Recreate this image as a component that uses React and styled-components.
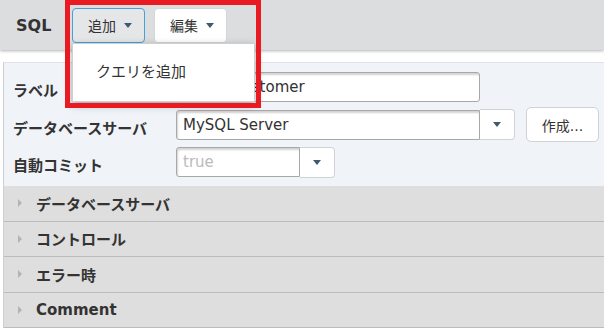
import React from 'react';
import styled, { createGlobalStyle } from 'styled-components';

const GlobalStyle = createGlobalStyle`
  body {
    margin: 0;
    background: #ffffff;
    overflow: hidden;
    font-family: 'DejaVu Sans', 'Noto Sans CJK JP', sans-serif;
    color: #333333;
  }
`;

const Page = styled.div`
  position: relative;
  width: 604px;
  height: 330px;
`;

const Header = styled.div`
  display: flex;
  align-items: center;
  height: 50px;
  padding: 0 16px;
  background: #dcdddf;
  box-shadow: 0 1px 3px rgba(0, 0, 0, 0.3);
`;

const Title = styled.div`
  font-size: 16px;
  font-weight: bold;
  width: 56px;
  color: #333;
`;

const MenuWrap = styled.div`
  position: relative;
`;

const Caret = styled.span`
  display: inline-block;
  width: 0;
  height: 0;
  border-left: 4.5px solid transparent;
  border-right: 4.5px solid transparent;
  border-top: 5px solid #3d5a6f;
`;

const ToolButton = styled.button`
  display: flex;
  align-items: center;
  gap: 8px;
  height: 35px;
  padding: 0 12px 0 15px;
  margin-left: ${(p) => p.$ml || 0}px;
  box-sizing: border-box;
  font: 14px 'DejaVu Sans', 'Noto Sans CJK JP', sans-serif;
  color: #333;
  border-radius: 4px;
  background: ${(p) => (p.$active ? '#e5e6e8' : '#ffffff')};
  border: 1px solid ${(p) => (p.$active ? '#4a9fd9' : '#d6d6d6')};
`;

const Menu = styled.div`
  position: absolute;
  top: 35px;
  left: 0;
  width: 183px;
  box-sizing: border-box;
  padding: 18px 23px;
  background: #ffffff;
  border: 1px solid #cfcfcf;
  box-shadow: 0 3px 8px rgba(0, 0, 0, 0.35);
  font-size: 15px;
  line-height: 21px;
  color: #333;
  white-space: nowrap;
  z-index: 5;
`;

const Panel = styled.div`
  margin: 12px -10px 0 3px;
  border-left: 1px solid #cdd1d7;
  border-top: 1px solid #dfe3e9;
`;

const Form = styled.div`
  display: grid;
  grid-template-columns: 163px auto;
  row-gap: 5px;
  align-items: center;
  padding: 9px 0 9px 9px;
  background: #f0f3f8;
`;

const Label = styled.div`
  font-size: 15px;
  font-weight: bold;
  padding-top: 5px;
  color: #333;
`;

const Controls = styled.div`
  display: flex;
  align-items: center;
  height: ${(p) => p.$h || 30}px;
`;

const TextInput = styled.div`
  width: ${(p) => p.$w}px;
  height: 30px;
  box-sizing: border-box;
  display: flex;
  align-items: center;
  padding: 0 6px;
  font-size: 15px;
  color: ${(p) => (p.$placeholder ? '#bbbbbb' : '#333333')};
  background: #ffffff;
  border: 1px solid #a8a8a8;
  border-radius: ${(p) => (p.$joined ? '3px 0 0 3px' : '3px')};
  box-shadow: inset 1px 2px 2px rgba(0, 0, 0, 0.18);
  overflow: hidden;
  white-space: nowrap;
`;

const Toggle = styled.div`
  width: 35px;
  height: 31px;
  box-sizing: border-box;
  display: flex;
  align-items: center;
  justify-content: center;
  background: #ffffff;
  border: 1px solid #cfd2d6;
  border-left: none;
  border-radius: 0 4px 4px 0;
`;

const CreateButton = styled.div`
  margin-left: 11px;
  width: 73px;
  height: 35px;
  box-sizing: border-box;
  display: flex;
  align-items: center;
  justify-content: center;
  font-size: 14px;
  color: #333;
  background: #ffffff;
  border: 1px solid #cfd2d6;
  border-radius: 5px;
`;

const Section = styled.div`
  display: flex;
  align-items: center;
  gap: 14px;
  height: 35.5px;
  box-sizing: border-box;
  padding-left: 14px;
  background: #dedede;
  border-bottom: 1px solid #bcbcbc;
  font-size: 15px;
  font-weight: bold;
  color: #333;
`;

const Arrow = styled.span`
  width: 0;
  height: 0;
  border-top: 4px solid transparent;
  border-bottom: 4px solid transparent;
  border-left: 4px solid #b3b3b3;
`;

const Highlight = styled.div`
  position: absolute;
  left: 65px;
  top: 0;
  width: 196px;
  height: 108px;
  box-sizing: border-box;
  border: 5px solid #ea1a22;
  pointer-events: none;
  z-index: 10;
`;

const sections = ['データベースサーバ', 'コントロール', 'エラー時', 'Comment'];

export default function App() {
  return (
    <Page>
      <GlobalStyle />
      <Header>
        <Title>SQL</Title>
        <MenuWrap>
          <ToolButton $active>
            追加 <Caret />
          </ToolButton>
          <Menu>クエリを追加</Menu>
        </MenuWrap>
        <ToolButton $ml={9}>
          編集 <Caret />
        </ToolButton>
      </Header>
      <Panel>
        <Form>
          <Label>ラベル</Label>
          <Controls>
            <TextInput $w={304}>Select customer</TextInput>
          </Controls>
          <Label>データベースサーバ</Label>
          <Controls $h={35}>
            <TextInput $w={304} $joined>
              MySQL Server
            </TextInput>
            <Toggle>
              <Caret />
            </Toggle>
            <CreateButton>作成...</CreateButton>
          </Controls>
          <Label>自動コミット</Label>
          <Controls>
            <TextInput $w={124} $joined $placeholder>
              true
            </TextInput>
            <Toggle>
              <Caret />
            </Toggle>
          </Controls>
        </Form>
        {sections.map((s) => (
          <Section key={s}>
            <Arrow />
            {s}
          </Section>
        ))}
      </Panel>
      <Highlight />
    </Page>
  );
}
